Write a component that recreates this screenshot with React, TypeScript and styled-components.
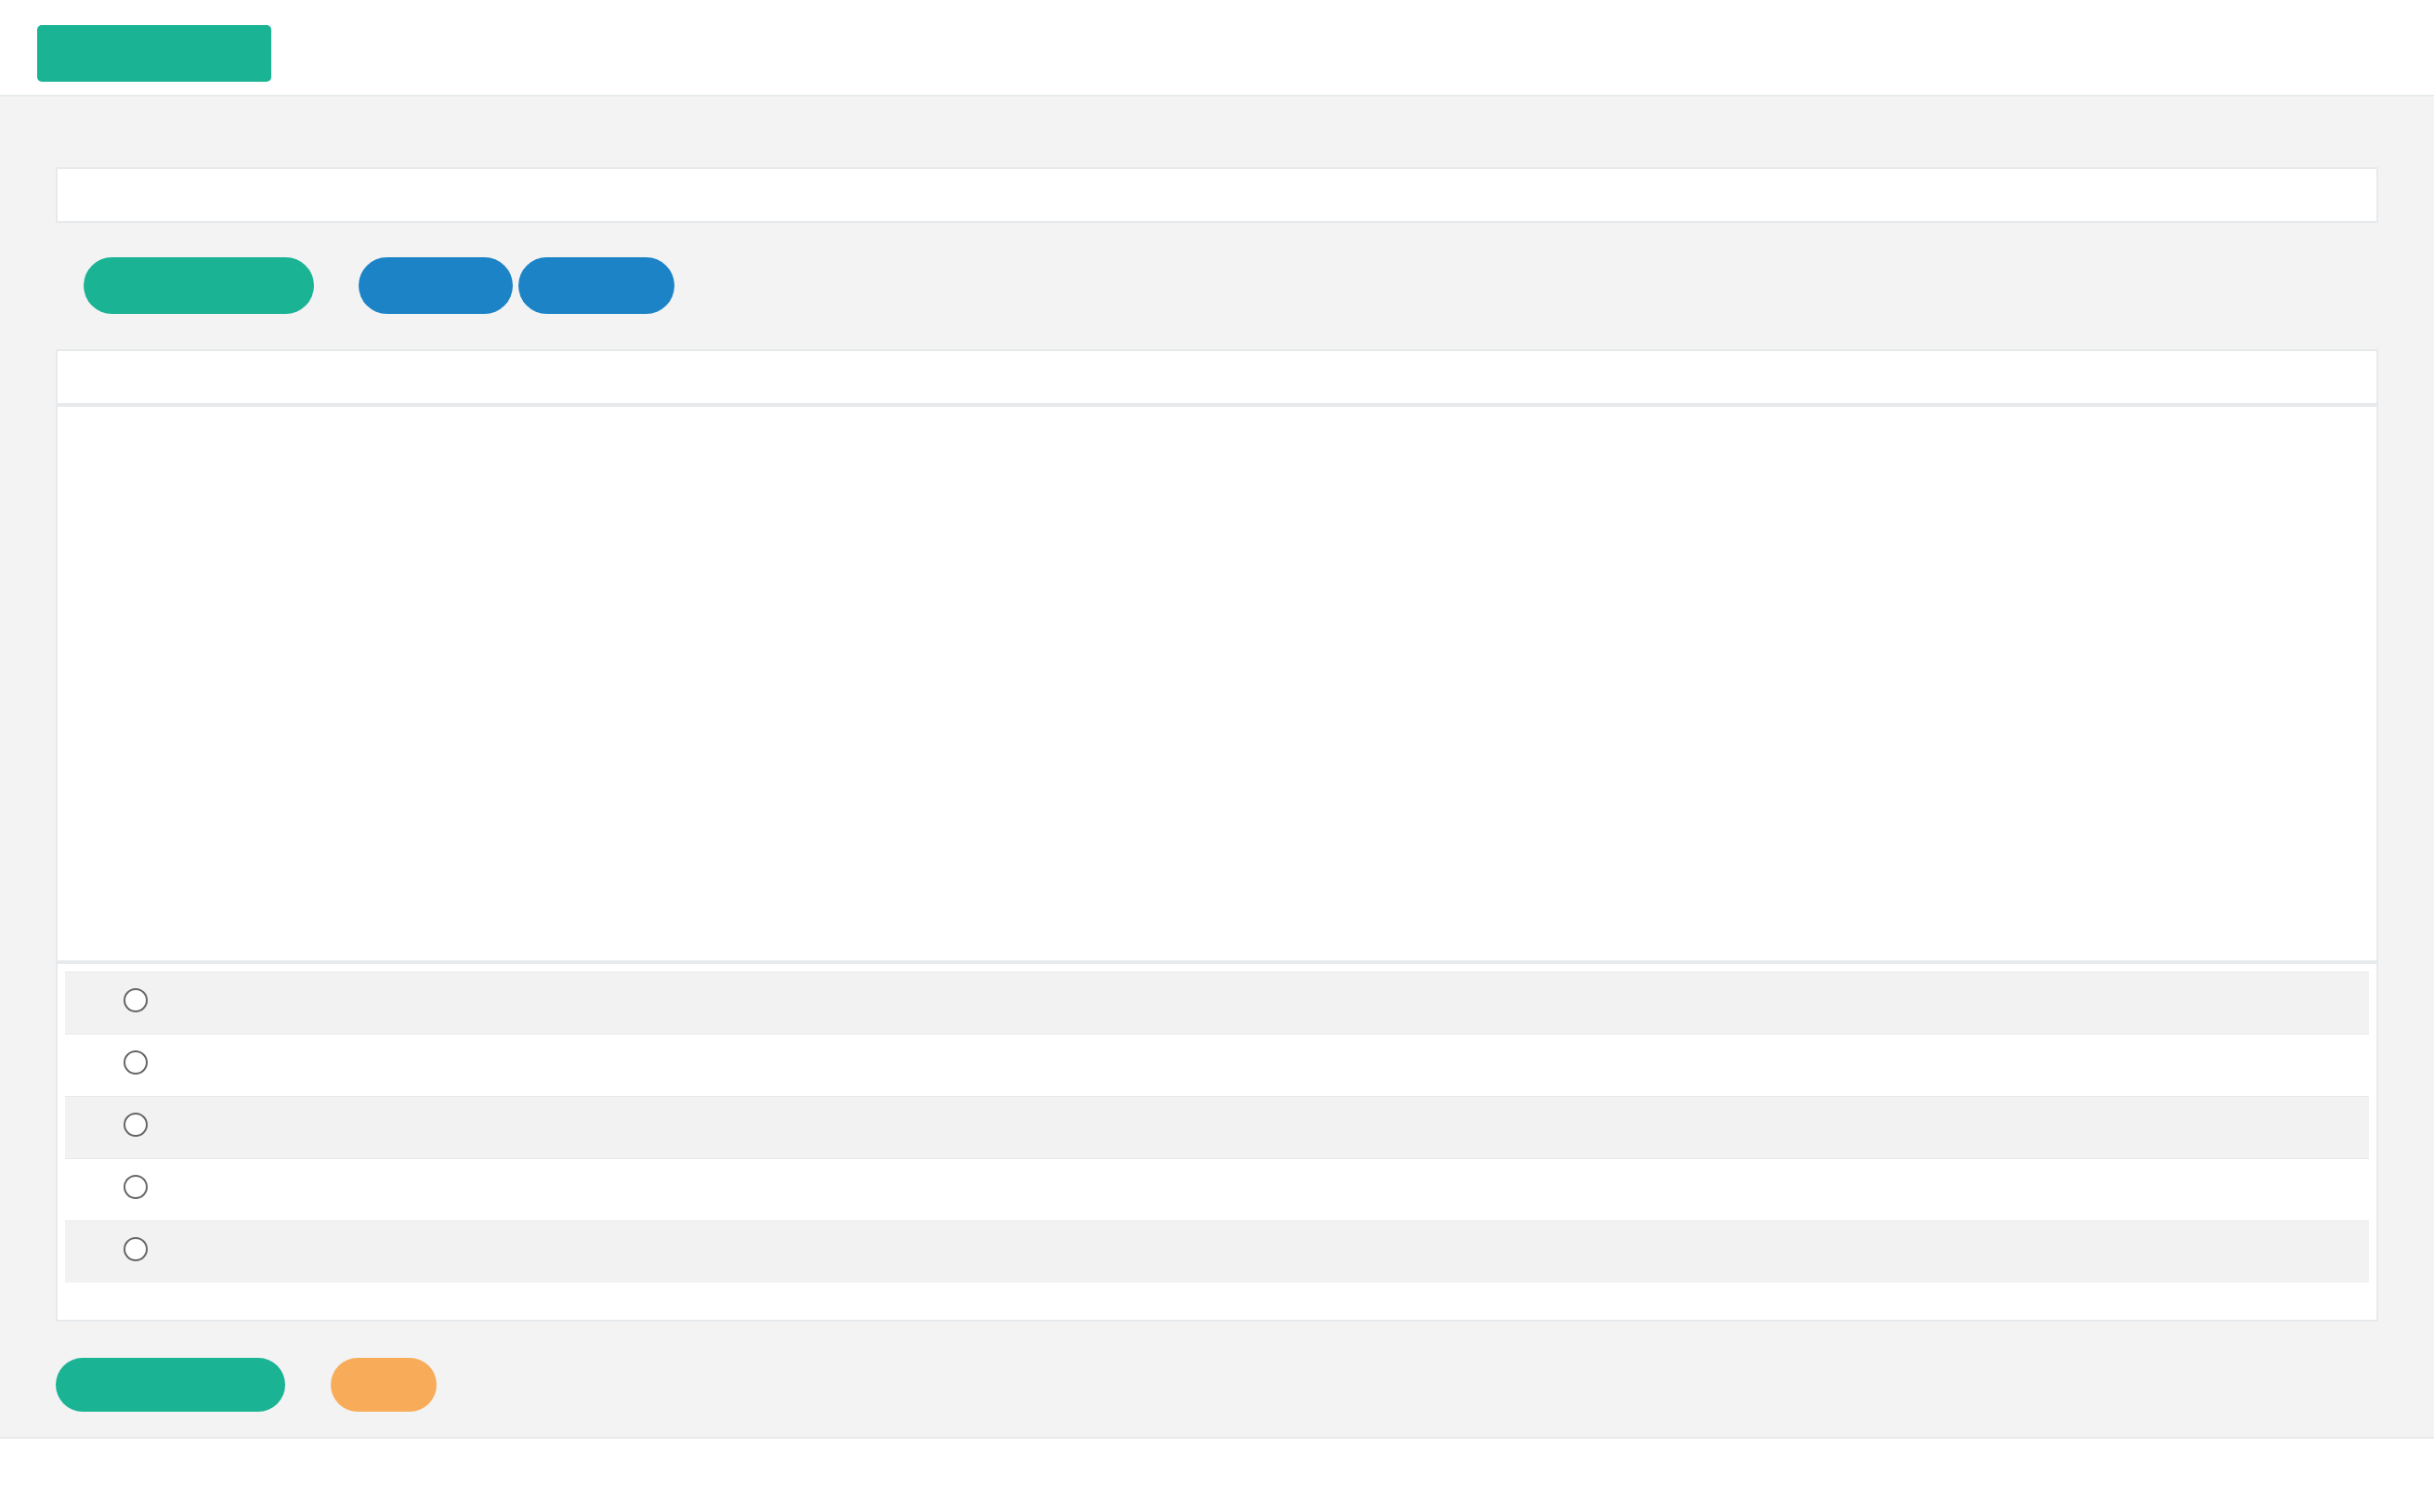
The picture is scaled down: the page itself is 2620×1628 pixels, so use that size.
import React from "react";
import styled, { createGlobalStyle } from "styled-components";

const GlobalStyle = createGlobalStyle`
  html, body {
    margin: 0;
    padding: 0;
    background: #ffffff;
    font-family: "Open Sans", "Liberation Sans", sans-serif;
  }
  * { box-sizing: border-box; }
`;

const GREEN = "#1ab394";
const BLUE = "#1c84c6";
const ORANGE = "#f8ac59";
const LINE = "#e7eaec";

const Page = styled.div`
  display: flex;
  flex-direction: column;
  min-height: 1628px;
  background: #ffffff;
`;

const TopBar = styled.header`
  height: 104px;
  padding: 27px 40px 0;
  background: #ffffff;
  border-bottom: 2px solid ${LINE};
`;

const BrandButton = styled.button`
  display: block;
  width: 252px;
  height: 61px;
  border: none;
  border-radius: 5px;
  background: ${GREEN};
  padding: 0;
`;

const Main = styled.main`
  display: flex;
  flex-direction: column;
  background: #f3f3f4;
  padding: 76px 60px 27px;
`;

const Panel = styled.div<{ $h: number }>`
  height: ${(p) => p.$h}px;
  background: #ffffff;
  border: 2px solid ${LINE};
`;

const PillRow = styled.div`
  display: flex;
  align-items: center;
  height: 61px;
  margin: 37px 0 38px;
  padding-left: 30px;
`;

const Pill = styled.button<{ $color: string; $w: number; $h: number; $ml?: number }>`
  width: ${(p) => p.$w}px;
  height: ${(p) => p.$h}px;
  margin-left: ${(p) => p.$ml ?? 0}px;
  border: none;
  padding: 0;
  border-radius: 999px;
  background: ${(p) => p.$color};
  flex: none;
`;

const Table = styled.div`
  display: flex;
  flex-direction: column;
`;

const ListPanel = styled.div`
  height: 387px;
  background: #ffffff;
  border: 2px solid ${LINE};
  padding: 8px 8px 0;
`;

const Row = styled.div<{ $striped: boolean }>`
  display: flex;
  align-items: flex-start;
  height: 67px;
  padding: 17px 0 0 63px;
  border-top: 1px solid ${LINE};
  background: ${(p) => (p.$striped ? "#f2f2f2" : "#ffffff")};
`;

const Radio = styled.span`
  display: block;
  width: 26px;
  height: 26px;
  border-radius: 50%;
  border: 2px solid #666666;
  background: #ffffff;
`;

const ActionRow = styled.div`
  display: flex;
  align-items: center;
  height: 58px;
  margin-top: 39px;
`;

const Footer = styled.footer`
  flex: 1;
  min-height: 80px;
  background: #ffffff;
  border-top: 2px solid ${LINE};
`;

export default function App() {
  const rows = [0, 1, 2, 3, 4];
  return (
    <>
      <GlobalStyle />
      <Page>
        <TopBar>
          <BrandButton aria-label="" />
        </TopBar>
        <Main>
          <Panel $h={60} />
          <PillRow>
            <Pill $color={GREEN} $w={248} $h={61} />
            <Pill $color={BLUE} $w={166} $h={61} $ml={48} />
            <Pill $color={BLUE} $w={168} $h={61} $ml={6} />
          </PillRow>
          <Table>
            <Panel $h={60} />
            <Panel $h={600} />
            <ListPanel>
              {rows.map((i) => (
                <Row key={i} $striped={i % 2 === 0}>
                  <Radio />
                </Row>
              ))}
            </ListPanel>
          </Table>
          <ActionRow>
            <Pill $color={GREEN} $w={247} $h={58} />
            <Pill $color={ORANGE} $w={114} $h={58} $ml={49} />
          </ActionRow>
        </Main>
        <Footer />
      </Page>
    </>
  );
}
